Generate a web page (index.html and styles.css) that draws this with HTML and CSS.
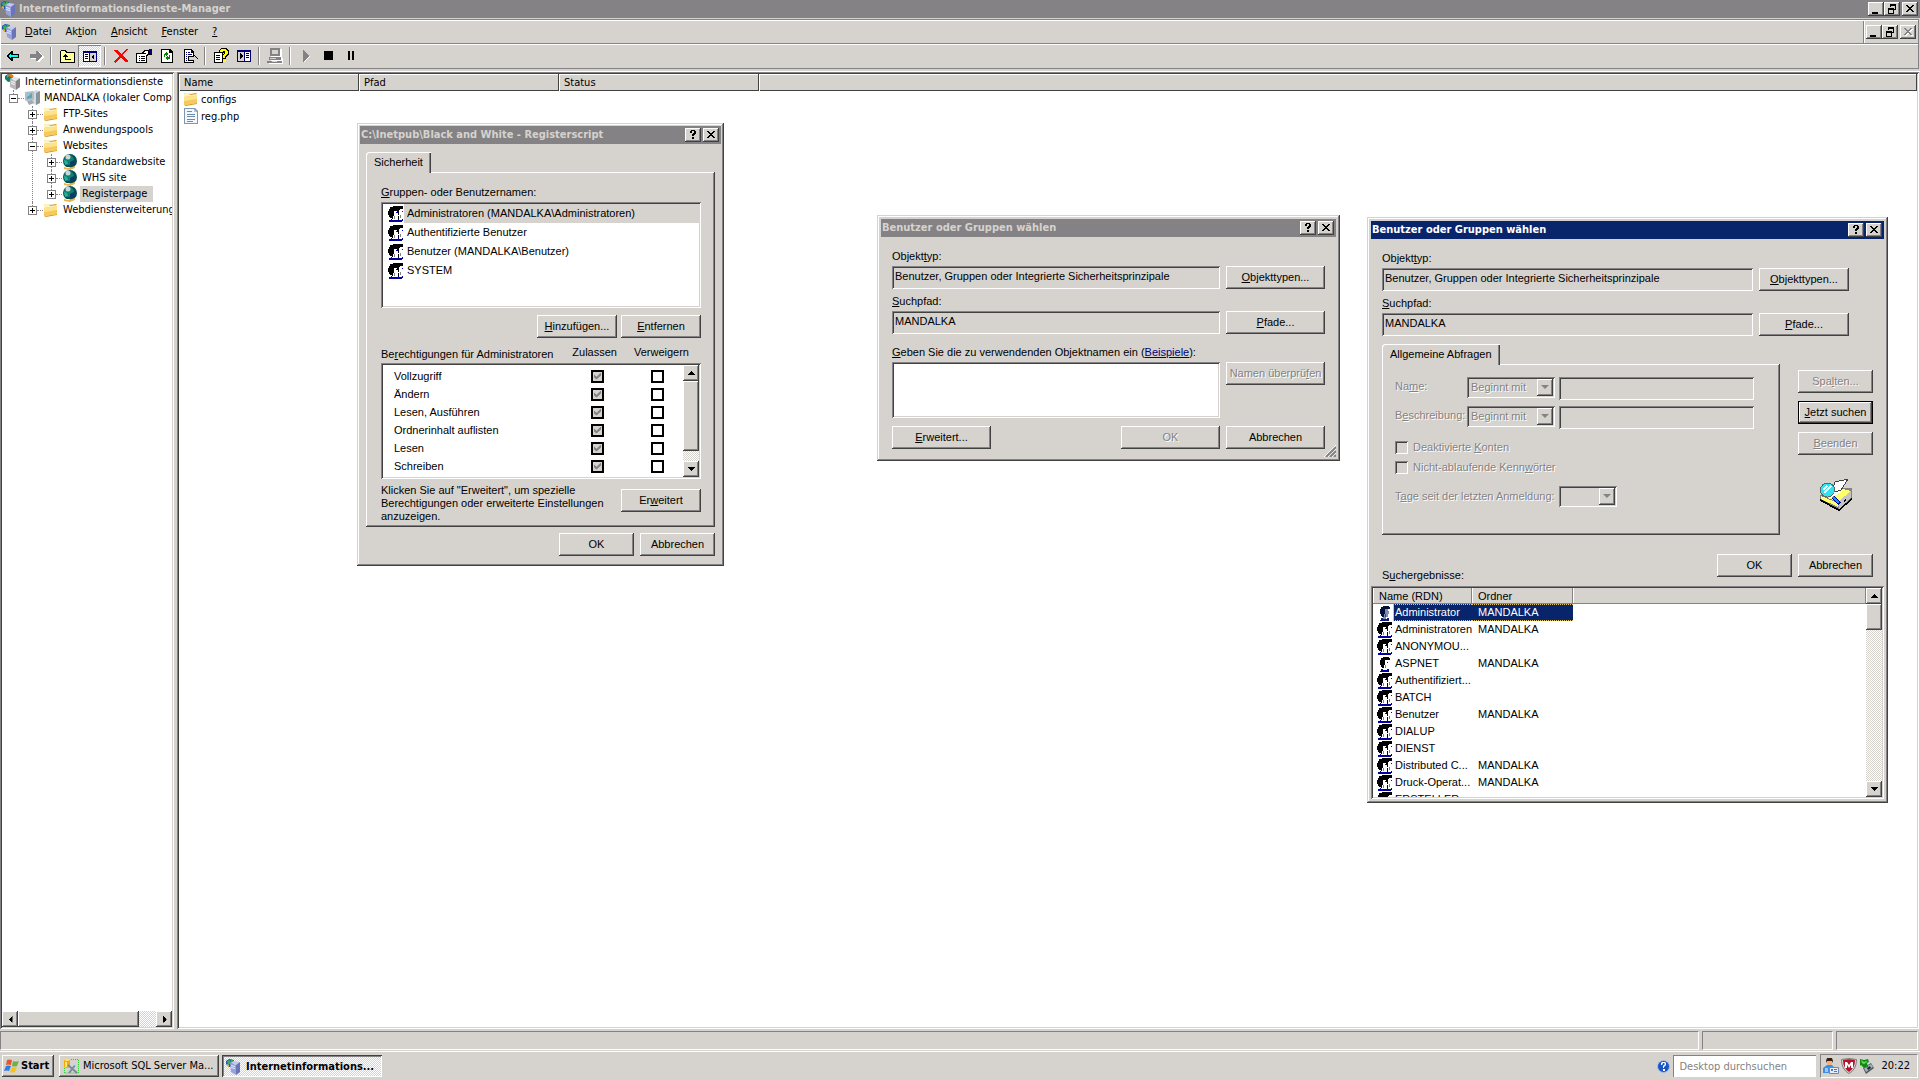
FILE: index.html
```html
<!DOCTYPE html>
<html lang="de">
<head>
    <meta charset="UTF-8">
    <meta name="viewport" content="width=device-width, initial-scale=1.0">
    <title>Internetinformationsdienste-Manager</title>
    <link rel="stylesheet" href="styles.css">
</head>
<body>
    <!-- Icon sprites -->
    <svg class="sprites" aria-hidden="true">
        <symbol id="server" viewBox="0 0 16 16">
            <path fill="#1c5ab5" d="M0 2l3-2 5 1v6L3 8 0 5z"/>
            <path fill="#3fae49" d="M1 2l3-1 1 3-3 2zM5 0l3 2-1 2-2-1z"/>
            <path fill="#f0b429" d="M1 5l2 1v2L1 7z"/>
            <path fill="#c3c8ee" d="M4 4l4-2 6 1-4 3z"/>
            <path fill="#9aa2dc" d="M4 4l6 2v10l-5-3z"/>
            <path fill="#6b74b8" d="M10 6l4-3v10l-4 3z"/>
            <path fill="#e9ebff" d="M5 6l4 1v1L5 7zM5 8l4 1v1L5 9z"/>
        </symbol>
        <symbol id="server-gray" viewBox="0 0 16 16">
            <path fill="#0f7d6c" d="M0 2l3-2 5 1v6L3 8 0 5z"/>
            <path fill="#e77817" d="M2 1l4-1 3 2-2 2-3-2-2 2z"/>
            <path fill="#e4e4e4" d="M5 5l4-2 6 1-4 3z"/>
            <path fill="#b9b9b9" d="M5 5l6 2v9l-6-3z"/>
            <path fill="#848284" d="M11 7l4-3v9l-4 3z"/>
            <path fill="#f7f7f7" d="M6 7l4 1v1L6 8zM6 9l4 1v1l-4-1z"/>
        </symbol>
        <symbol id="computer" viewBox="0 0 16 16">
            <path fill="#d4dade" d="M8 2l4-2 4 1v12l-4 2-4-2z"/>
            <path fill="#8a949b" d="M12 3l4-2v12l-4 2z"/>
            <path fill="#b3bcc2" d="M1 2l8-1 1 1v8l-8 1-1-1z"/>
            <path fill="#5fa3bd" d="M3 4l5-1v5L3 9z"/>
            <path fill="#8ecbe0" d="M3 4l5-1-5 4z"/>
            <path fill="#a2aab0" d="M3 11l5-1 2 3-5 2z"/>
        </symbol>
        <symbol id="folder" viewBox="0 0 16 16">
            <path fill="#d79a2b" d="M1 3l1-1h4l1 1 6-1 1 1v10l-11 2-2-1z"/>
            <path fill="#fdf3c0" d="M1 3l1-1h4l1 2 7-1v2L1 6z"/>
            <path fill="#ffe38b" d="M1 6l13-2v8L2 14l-1-1z"/>
            <path fill="#f6c95c" d="M1 10l13-2v4L2 14l-1-1z"/>
        </symbol>
        <symbol id="globe" viewBox="0 0 16 16">
            <circle cx="8" cy="7" r="7" fill="#06504f"/>
            <circle cx="7" cy="6" r="5" fill="#0d8078"/>
            <path fill="#0b3f62" d="M8 8l4-2 2 3-3 4-3-2z"/>
            <circle cx="6" cy="3" r="2.5" fill="#c8d6d4"/>
            <path fill="#2bb39a" d="M2 6l3 1 1 3-3 1z"/>
            <path fill="#e8b44f" d="M2 13l5 1 6-2v2l-5 2-6-1z"/>
            <path fill="#fff3c8" d="M3 13h4l2 1H5z"/>
        </symbol>
        <symbol id="file" viewBox="0 0 16 16">
            <path fill="#7d97b3" d="M1 0h11l3 3v13H1z"/>
            <path fill="#f3f6fa" d="M2 1h9v3h3v11H2z"/>
            <path fill="#b8c9dc" d="M11 1l3 3h-3z"/>
            <path fill="#6c8db0" d="M4 3h5v1H4zM4 6h8v1H4zM4 8h8v1H4zM4 11h8v1H4zM4 13h6v1H4z"/>
        </symbol>
        <symbol id="users" viewBox="0 0 16 16">
            <path fill="#000" d="M5 0h10v3h-2v1h-2v9H4v-1H2v-1H1V9H0V5h1V3h1V1h3z"/>
            <path fill="#00009c" d="M1 14h2v-1h3v1h4v-1h2v1h2v-1h1v2h-1v1H1z"/>
            <path fill="#fff" d="M6 5h3v2h1v2h1v1h-1v3H8v1H4v-1h1v-3h1zM12 3h3v2h1v4h-1v3h-1v2h-3v-3h1z"/>
            <path fill="#000" d="M5 6h1v3H5zM10 10h1v2h-1z"/>
            <path fill="#848284" d="M6 10h1v3H6zM12 9h1v3h-1z"/>
            <path fill="#00f" d="M8 6h1v1H8zM14 5h1v1h-1z"/>
        </symbol>
        <symbol id="user" viewBox="0 0 16 16">
            <path fill="#000" d="M6 1h6v1h1v2h-2v8H5v-1H4V9H3V4h1V2h2z"/>
            <path fill="#fff" d="M8 4h3v2h1v3h-1v3h-2v3H6v-3h1v-3h1z"/>
            <path fill="#00009c" d="M4 13h2v1h4v-1h2v3H3v-1h1z"/>
            <path fill="#00f" d="M10 6h1v1h-1z"/>
            <path fill="#848284" d="M8 9h1v3H8z"/>
        </symbol>
        <symbol id="user-sel" viewBox="0 0 16 16">
            <path fill="#04123a" d="M6 1h6v1h1v2h-2v8H5v-1H4V9H3V4h1V2h2z"/>
            <path fill="#7f8fb4" d="M8 4h3v2h1v3h-1v3h-2v3H6v-3h1v-3h1z"/>
            <path fill="#0a1f80" d="M4 13h2v1h4v-1h2v3H3v-1h1z"/>
            <path fill="#3b4c80" d="M8 9h1v3H8z"/>
        </symbol>
        <symbol id="minimize" viewBox="0 0 12 10"><path d="M2 8h6v2H2z"/></symbol>
        <symbol id="restore" viewBox="0 0 12 10"><path d="M4 0h6v6H8V5h1V2H5v1H4zM2 4h6v6H2zM3 6v3h4V6z" fill-rule="evenodd"/></symbol>
        <symbol id="close" viewBox="0 0 12 10"><path d="M2 1h2v1h1v1h2V2h1V1h2v1H9v1H8v1H7v1h1v1h1v1h1v1H8V7H7V6H5v1H4v1H2V7h1V6h1V5h1V4H4V3H3V2H2z"/></symbol>
        <symbol id="question" viewBox="0 0 12 10"><path d="M3 1h1V0h4v1h1v3H8v1H7v1H5V4h1V3h1V1H5v2H3zM5 7h2v2H5z"/></symbol>
        <symbol id="up" viewBox="0 0 7 4"><path d="M3 0h1v1h1v1h1v1h1v1H0V3h1V2h1V1h1z"/></symbol>
        <symbol id="down" viewBox="0 0 7 4"><path d="M0 0h7v1H6v1H5v1H4v1H3V3H2V2H1V1H0z"/></symbol>
    </svg>

    <header class="titlebar app-title">
        <svg class="icon"><use href="#server"/></svg>
        <h1>Internetinformationsdienste-Manager</h1>
        <div class="caption-buttons">
            <button type="button" aria-label="Minimieren"><svg><use href="#minimize"/></svg></button>
            <button type="button" aria-label="Wiederherstellen"><svg><use href="#restore"/></svg></button>
            <button type="button" class="close" aria-label="Schließen"><svg><use href="#close"/></svg></button>
        </div>
    </header>

    <div class="rebar">
        <nav class="menubar">
            <svg class="icon"><use href="#server"/></svg>
            <button type="button"><u>D</u>atei</button>
            <button type="button">Ak<u>t</u>ion</button>
            <button type="button"><u>A</u>nsicht</button>
            <button type="button"><u>F</u>enster</button>
            <button type="button"><u>?</u></button>
            <div class="caption-buttons mdi">
                <button type="button" aria-label="Minimieren"><svg><use href="#minimize"/></svg></button>
                <button type="button" aria-label="Wiederherstellen"><svg><use href="#restore"/></svg></button>
                <button type="button" class="close" aria-label="Schließen" disabled><svg><use href="#close"/></svg></button>
            </div>
        </nav>
        <div class="toolbar">
            <button type="button" aria-label="Zurück"><svg viewBox="0 0 16 16"><path d="M8 3v3h6v4H8v3H6L1 8l5-5z"/><path fill="#0ff" d="M6 5v2h7v2H6v2L3 8z"/></svg></button>
            <button type="button" aria-label="Vorwärts"><svg viewBox="0 0 16 16"><path fill="#fff" d="M9 4v3H3v4h6v3h2l5-5-5-5z"/><path fill="#848284" d="M8 3v3H2v4h6v3h1l5-5-5-5z"/></svg></button>
            <span class="sep"></span>
            <button type="button" aria-label="Nach oben"><svg viewBox="0 0 16 16"><path d="M2 2h5l1 2h7l1 1v10H1V3z"/><path fill="#ffff9c" d="M2 3h4l1 2h8v9H2z"/><path d="M6 6h1v1h1v1h1v1H7v2h5v1H6V9H4V8h1V7h1z"/></svg></button>
            <button type="button" class="pressed" aria-label="Konsolenstruktur"><svg viewBox="0 0 16 16"><path fill="#00007b" d="M1 3h14v11H1z"/><path fill="#fff" d="M2 5h5v8H2z"/><path fill="#d6d3ce" d="M8 5h6v8H8z"/><path d="M3 6h3v1H3zM3 8h3v1H3zM3 10h3v1H3zM12 6v6L9 9z"/></svg></button>
            <span class="sep"></span>
            <button type="button" aria-label="Löschen"><svg viewBox="0 0 16 16"><path fill="#f00" d="M1 2h3l4 4 5-5h2l-5 6 5 6v1h-3L8 9l-4 5-2 1-1-1 5-6z"/></svg></button>
            <button type="button" aria-label="Eigenschaften"><svg viewBox="0 0 16 16"><path d="M0 5h5l4-3h4V1h3v6h-3l-2 1v7H0z"/><path fill="#fff" d="M1 6h5l3-3h3v3l-2 1v7H1z"/><path fill="#00007b" d="M13 1h3v5h-3z"/><path d="M3 8h1v1H3zM5 8h4v1H5zM3 10h1v1H3zM5 10h4v1H5zM3 12h1v1H3zM5 12h4v1H5zM6 5h4v1H6z"/></svg></button>
            <button type="button" aria-label="Aktualisieren"><svg viewBox="0 0 16 16"><path d="M2 1h9l3 3v11H2z"/><path fill="#fff" d="M3 2h7v3h3v9H3z"/><path fill="#008200" d="M7 4l3 2-3 2V7H6v2H5V6l1-1h1zM9 8l-3 2 3 2v-1h1l1-1V7h-1v2H9z"/></svg></button>
            <button type="button" aria-label="Liste exportieren"><svg viewBox="0 0 16 16"><path d="M2 1h8l2 3v3l3 3-3 4v1H2z"/><path fill="#fff" d="M3 2h6v3h2v9H3z"/><path fill="#00007b" d="M4 4h1v1H4zM6 4h2v1H6zM4 6h1v1H4zM6 6h4v1H6zM4 8h1v1H4zM4 10h1v1H4zM4 12h1v1H4z"/><path d="M6 8h5V6l5 5-5 4v-2H6z"/><path fill="#d6d3ce" d="M7 9h5V8l3 3-3 3v-2H7z"/></svg></button>
            <span class="sep"></span>
            <button type="button" aria-label="Hilfe"><svg viewBox="0 0 16 16"><path d="M1 4h9v11H1z"/><path fill="#fff" d="M2 5h7v9H2z"/><path d="M3 7h4v1H3zM3 9h4v1H3zM3 11h4v1H3zM6 2l2-2h5l3 2v4l-3 3v2H9V8l2-3H6z"/><path fill="#ff0" d="M7 2l1-1h4l3 2v2l-3 3v2h-2V8l2-3V3h-2v1H7zM10 12h3v2h-3z"/></svg></button>
            <button type="button" aria-label="Aktionsbereich"><svg viewBox="0 0 16 16"><path fill="#00007b" d="M1 2h14v12H1z"/><path fill="#fff" d="M9 4h5v9H9z"/><path fill="#d6d3ce" d="M2 4h6v9H2z"/><path d="M10 5h3v1h-3zM10 7h3v1h-3zM10 9h3v1h-3zM4 5v6l3-3z"/></svg></button>
            <span class="sep"></span>
            <button type="button" aria-label="Verbinden" disabled><svg viewBox="0 0 16 16"><path fill="#fff" d="M4 1h11v9h1v6H2v-3h2z"/><path fill="#848284" d="M3 0h10v8H3zM2 9h12v3H2zM0 13h15v2H0z"/><path fill="#d6d3ce" d="M5 2h6v4H5zM3 10h6v1H3zM5 13h5v1H5z"/></svg></button>
            <span class="sep"></span>
            <button type="button" aria-label="Starten" disabled><svg viewBox="0 0 16 16"><path fill="#fff" d="M6 3l6 6-6 5z"/><path fill="#848284" d="M5 2l6 6-6 6z"/></svg></button>
            <button type="button" aria-label="Beenden"><svg viewBox="0 0 16 16"><path d="M3 3h9v9H3z"/></svg></button>
            <button type="button" aria-label="Anhalten"><svg viewBox="0 0 16 16"><path d="M4 3h2v9H4zM8 3h2v9H8z"/></svg></button>
        </div>
    </div>

    <main class="workspace">
        <aside class="tree-pane sunken">
            <div class="tree">
                <div class="node root"><svg class="icon"><use href="#server-gray"/></svg><span>Internetinformationsdienste</span></div>
                <ul>
                    <li>
                        <div class="node"><i class="box minus"></i><svg class="icon"><use href="#computer"/></svg><span>MANDALKA (lokaler Computer)</span></div>
                        <ul>
                            <li><div class="node"><i class="box plus"></i><svg class="icon"><use href="#folder"/></svg><span>FTP-Sites</span></div></li>
                            <li><div class="node"><i class="box plus"></i><svg class="icon"><use href="#folder"/></svg><span>Anwendungspools</span></div></li>
                            <li>
                                <div class="node"><i class="box minus"></i><svg class="icon"><use href="#folder"/></svg><span>Websites</span></div>
                                <ul>
                                    <li><div class="node"><i class="box plus"></i><svg class="icon"><use href="#globe"/></svg><span>Standardwebsite</span></div></li>
                                    <li><div class="node"><i class="box plus"></i><svg class="icon"><use href="#globe"/></svg><span>WHS site</span></div></li>
                                    <li><div class="node selected"><i class="box plus"></i><svg class="icon"><use href="#globe"/></svg><span>Registerpage</span></div></li>
                                </ul>
                            </li>
                            <li><div class="node"><i class="box plus"></i><svg class="icon"><use href="#folder"/></svg><span>Webdiensterweiterungen</span></div></li>
                        </ul>
                    </li>
                </ul>
            </div>
            <div class="scrollbar horizontal">
                <button type="button" aria-label="Nach links"><svg class="turn-left"><use href="#up"/></svg></button>
                <span class="thumb"></span>
                <span class="track"></span>
                <button type="button" aria-label="Nach rechts"><svg class="turn-right"><use href="#up"/></svg></button>
            </div>
        </aside>

        <section class="list-pane sunken">
            <table class="files">
                <colgroup><col class="c-name"><col class="c-path"><col class="c-status"><col></colgroup>
                <thead>
                    <tr><th>Name</th><th>Pfad</th><th>Status</th><td></td></tr>
                </thead>
                <tbody>
                    <tr><td><svg class="icon"><use href="#folder"/></svg>configs</td><td></td><td></td><td></td></tr>
                    <tr><td><svg class="icon"><use href="#file"/></svg>reg.php</td><td></td><td></td><td></td></tr>
                </tbody>
            </table>
        </section>
    </main>

    <div class="statusbar"><span></span><span class="mid"></span><span class="end"></span></div>

    <footer class="taskbar">
        <button type="button" class="start">
            <svg class="icon" viewBox="0 0 16 16"><path fill="#e4572e" d="M3 2q2-1 5 0L7 7Q4 6 2 7z"/><path fill="#6cb33f" d="M9 3q3 1 6 0l-2 5q-2 1-5 0z"/><path fill="#2f7de1" d="M2 8q2-1 5 0l-2 5q-2-1-5 0z"/><path fill="#f6c419" d="M8 9q3 1 5 0l-2 5q-2 1-5 0z"/></svg>
            Start
        </button>
        <button type="button" class="task">
            <svg class="icon" viewBox="0 0 16 16"><path fill="#f5a800" d="M1 2q3-3 6 0v7q-3 2-6 0z"/><path fill="#ffe27a" d="M1 2q3-3 6 0-3 2-6 0zM2 4h2v5H2z"/><path fill="none" stroke="#35c635" stroke-dasharray="1 1" d="M8 1.500h7.500V15M1.500 10v5H15"/><path fill="none" stroke="#7a8aa0" stroke-width="2" d="M5 7l9 8M13 6l-7 9"/><path fill="#c9d4e4" d="M10 5h5v2l-2 1-3-1z"/></svg>
            Microsoft SQL Server Ma...
        </button>
        <button type="button" class="task active">
            <svg class="icon"><use href="#server"/></svg>
            Internetinformations...
        </button>
        <div class="search">
            <svg class="help" viewBox="0 0 13 13"><circle cx="6.500" cy="6.500" r="6" fill="#1d56c4" stroke="#a9c1ec"/><path fill="#fff" d="M4 5V3l1-1h3l1 1v2L7 7v1H6V6l2-2-1-1H6L5 5zM6 9h2v2H6z"/></svg>
            <input type="text" aria-label="Desktop durchsuchen" placeholder="Desktop durchsuchen">
        </div>
        <div class="tray">
            <svg class="icon" viewBox="0 0 16 16"><path fill="#3a1d0c" d="M4 0h5l1 3-1 2H4L3 3z"/><path fill="#f0b080" d="M4 3h5v3L7 8H6L4 6z"/><path fill="#3f8de0" d="M0 10l4-3h5l3 3v5H0z"/><path fill="#9cc6f4" d="M2 10h3v4H2z"/><path fill="#e7edf7" stroke="#6f87ad" d="M6.500 9.500h9v6h-9z"/><path fill="#4b78c2" d="M8 11h2v2H8zM11 11h3v1h-3zM11 13h3v1h-3z"/></svg>
            <svg class="icon" viewBox="0 0 16 16"><path fill="#d9d9d9" stroke="#7c7c7c" d="M.5 1.500Q8-.5 15.500 1.500q0 10-7.500 14-7.500-4-7.500-14z"/><path fill="#b5122a" d="M2 2q6-1.500 12 0 0 8-6 12Q2 10 2 2z"/><path fill="#fff" d="M4 10V4h2l2 3 2-3h2v6h-2V7L8 10 6 7v3z"/></svg>
            <svg class="icon" viewBox="0 0 16 16"><path fill="#4d5660" d="M4 10l8-5 3 5-8 6z"/><path fill="#a9b2ba" d="M5 10l7-4 2 3-7 5z"/><path fill="#1c2a36" d="M8 10l3-2 1 2-3 2z"/><path fill="#148a14" d="M1 1l4 1 4-1 1 3-2 1 1 4-4 1-3-3-1 1z"/><path fill="#5fe05f" d="M2 2l3 2 3-1v1L5 6 3 5z"/></svg>
            <time>20:22</time>
        </div>
    </footer>

    <!-- Security properties -->
    <section class="window dialog-security" aria-labelledby="t-security">
        <div class="titlebar">
            <h2 id="t-security">C:\Inetpub\Black and White - Registerscript</h2>
            <div class="caption-buttons">
                <button type="button" aria-label="Hilfe"><svg><use href="#question"/></svg></button>
                <button type="button" class="close" aria-label="Schließen"><svg><use href="#close"/></svg></button>
            </div>
        </div>
        <div class="window-body">
            <button type="button" class="tab">Sicherheit</button>
            <div class="panel">
                <div class="label"><u>G</u>ruppen- oder Benutzernamen:</div>
                <ul class="groups sunken">
                    <li class="selected"><svg class="icon"><use href="#users"/></svg><span>Administratoren (MANDALKA\Administratoren)</span></li>
                    <li><svg class="icon"><use href="#users"/></svg><span>Authentifizierte Benutzer</span></li>
                    <li><svg class="icon"><use href="#users"/></svg><span>Benutzer (MANDALKA\Benutzer)</span></li>
                    <li><svg class="icon"><use href="#users"/></svg><span>SYSTEM</span></li>
                </ul>
                <div class="group-buttons">
                    <button type="button" class="btn"><u>H</u>inzufügen...</button>
                    <button type="button" class="btn"><u>E</u>ntfernen</button>
                </div>
                <div class="perm-head">
                    <span class="who">Be<u>r</u>echtigungen für Administratoren</span>
                    <span>Zulassen</span>
                    <span>Verweigern</span>
                </div>
                <div class="perms sunken">
                    <table>
                        <tr><th scope="row">Vollzugriff</th><td><input type="checkbox" aria-label="Vollzugriff zulassen" checked disabled></td><td><input type="checkbox" aria-label="Vollzugriff verweigern"></td></tr>
                        <tr><th scope="row">Ändern</th><td><input type="checkbox" aria-label="Ändern zulassen" checked disabled></td><td><input type="checkbox" aria-label="Ändern verweigern"></td></tr>
                        <tr><th scope="row">Lesen, Ausführen</th><td><input type="checkbox" aria-label="Ausführen zulassen" checked disabled></td><td><input type="checkbox" aria-label="Ausführen verweigern"></td></tr>
                        <tr><th scope="row">Ordnerinhalt auflisten</th><td><input type="checkbox" aria-label="Auflisten zulassen" checked disabled></td><td><input type="checkbox" aria-label="Auflisten verweigern"></td></tr>
                        <tr><th scope="row">Lesen</th><td><input type="checkbox" aria-label="Lesen zulassen" checked disabled></td><td><input type="checkbox" aria-label="Lesen verweigern"></td></tr>
                        <tr><th scope="row">Schreiben</th><td><input type="checkbox" aria-label="Schreiben zulassen" checked disabled></td><td><input type="checkbox" aria-label="Schreiben verweigern"></td></tr>
                    </table>
                    <div class="scrollbar">
                        <button type="button" aria-label="Nach oben"><svg><use href="#up"/></svg></button>
                        <span class="thumb"></span>
                        <span class="track"></span>
                        <button type="button" aria-label="Nach unten"><svg><use href="#down"/></svg></button>
                    </div>
                </div>
                <div class="note">
                    <p>Klicken Sie auf "Erweitert", um spezielle<br>Berechtigungen oder erweiterte Einstellungen<br>anzuzeigen.</p>
                    <button type="button" class="btn">Er<u>w</u>eitert</button>
                </div>
            </div>
            <div class="actions">
                <button type="button" class="btn">OK</button>
                <button type="button" class="btn">Abbrechen</button>
            </div>
        </div>
    </section>

    <!-- Object picker, simple -->
    <section class="window sizable dialog-pick" aria-labelledby="t-pick">
        <div class="titlebar">
            <h2 id="t-pick">Benutzer oder Gruppen wählen</h2>
            <div class="caption-buttons">
                <button type="button" aria-label="Hilfe"><svg><use href="#question"/></svg></button>
                <button type="button" class="close" aria-label="Schließen"><svg><use href="#close"/></svg></button>
            </div>
        </div>
        <form class="window-body">
            <label for="pick-type">Objekt<u>t</u>yp:</label>
            <div class="row">
                <input class="field" id="pick-type" type="text" readonly value="Benutzer, Gruppen oder Integrierte Sicherheitsprinzipale">
                <button type="button" class="btn"><u>O</u>bjekttypen...</button>
            </div>
            <label for="pick-path"><u>S</u>uchpfad:</label>
            <div class="row">
                <input class="field" id="pick-path" type="text" readonly value="MANDALKA">
                <button type="button" class="btn"><u>P</u>fade...</button>
            </div>
            <label for="pick-names" class="names"><u>G</u>eben Sie die zu verwendenden Objektnamen ein (<a href="#">Beispiele</a>):</label>
            <div class="row">
                <textarea class="field" id="pick-names"></textarea>
                <button type="button" class="btn" disabled>Namen überprü<u>f</u>en</button>
            </div>
            <div class="row bottom">
                <button type="button" class="btn first"><u>E</u>rweitert...</button>
                <button type="button" class="btn" disabled>OK</button>
                <button type="button" class="btn">Abbrechen</button>
            </div>
        </form>
        <svg class="grip" viewBox="0 0 12 12"><path stroke="#fff" d="M0 12L12 0M4 12l8-8M8 12l4-4"/><path stroke="#848284" stroke-width="2" d="M2 12L12 2M6 12l6-6M10 12l2-2"/></svg>
    </section>

    <!-- Object picker, advanced -->
    <section class="window sizable dialog-search" aria-labelledby="t-search">
        <div class="titlebar active">
            <h2 id="t-search">Benutzer oder Gruppen wählen</h2>
            <div class="caption-buttons">
                <button type="button" aria-label="Hilfe"><svg><use href="#question"/></svg></button>
                <button type="button" class="close" aria-label="Schließen"><svg><use href="#close"/></svg></button>
            </div>
        </div>
        <form class="window-body">
            <label for="s-type">Objekt<u>t</u>yp:</label>
            <div class="row">
                <input class="field" id="s-type" type="text" readonly value="Benutzer, Gruppen oder Integrierte Sicherheitsprinzipale">
                <button type="button" class="btn"><u>O</u>bjekttypen...</button>
            </div>
            <label for="s-path"><u>S</u>uchpfad:</label>
            <div class="row">
                <input class="field" id="s-path" type="text" readonly value="MANDALKA">
                <button type="button" class="btn"><u>P</u>fade...</button>
            </div>
            <div class="query">
                <div class="query-main">
                    <button type="button" class="tab">Allgemeine Abfragen</button>
                    <div class="panel disabled">
                        <div class="criteria">
                            <label for="q-name">Na<u>m</u>e:</label>
                            <span class="combo"><select id="q-name" disabled><option>Beginnt mit</option></select></span>
                            <input class="field" type="text" aria-label="Name" disabled>
                            <label for="q-desc">B<u>e</u>schreibung:</label>
                            <span class="combo"><select id="q-desc" disabled><option>Beginnt mit</option></select></span>
                            <input class="field" type="text" aria-label="Beschreibung" disabled>
                        </div>
                        <div class="check"><input type="checkbox" id="q-off" disabled><label for="q-off">Deaktivierte <u>K</u>onten</label></div>
                        <div class="check"><input type="checkbox" id="q-pw" disabled><label for="q-pw">Nicht-ablaufende Kenn<u>w</u>örter</label></div>
                        <div class="days">
                            <label for="q-days">T<u>a</u>ge seit der letzten Anmeldung:</label>
                            <span class="combo"><select id="q-days" disabled><option></option></select></span>
                        </div>
                    </div>
                </div>
                <div class="query-side">
                    <button type="button" class="btn" disabled>Spa<u>l</u>ten...</button>
                    <button type="button" class="btn default"><u>J</u>etzt suchen</button>
                    <button type="button" class="btn" disabled><u>B</u>eenden</button>
                    <svg class="find" viewBox="0 0 32 32">
                        <path fill="#848284" d="M0 16l13-6 19-1v10L19 31 0 21z"/>
                        <path fill="#ffff6b" d="M1 16l14-8 16 4-13 11z"/>
                        <path fill="#fff" d="M4 16l12-5 5 2-10 6z"/>
                        <path fill="#c3c3c3" d="M18 23l13-11v7L19 30z"/>
                        <path fill="#ffff6b" d="M1 17l17 7v4L1 20z"/>
                        <path d="M0 20l19 10 13-11v2L19 32 0 22zM24 21l2-2v2l-2 2z"/>
                        <path fill="#fff" stroke="#424142" d="M15 3l13-3-7 11-10 3z"/>
                        <circle cx="7.500" cy="11" r="7" fill="#31e3ef" stroke="#5a6668"/>
                        <path stroke="#fff" stroke-width="2" d="M4 14l7-7M3 11l4-4"/>
                        <path stroke="#00007b" stroke-width="4" d="M13 18l7 7"/>
                        <path stroke="#09f" stroke-width="2" d="M13 18l6 6"/>
                    </svg>
                </div>
            </div>
            <div class="row results-bar">
                <span class="results-label">S<u>u</u>chergebnisse:</span>
                <button type="button" class="btn">OK</button>
                <button type="button" class="btn">Abbrechen</button>
            </div>
        </form>
        <div class="results sunken">
            <div class="results-view">
                <table>
                    <colgroup><col class="c-rdn"><col class="c-folder"><col></colgroup>
                    <thead><tr><th>Name (RDN)</th><th>Ordner</th><td></td></tr></thead>
                    <tbody>
                        <tr class="selected"><td><svg class="icon"><use href="#user-sel"/></svg><span>Administrator</span></td><td>MANDALKA</td><td></td></tr>
                        <tr><td><svg class="icon"><use href="#users"/></svg><span>Administratoren</span></td><td>MANDALKA</td><td></td></tr>
                        <tr><td><svg class="icon"><use href="#users"/></svg><span>ANONYMOU...</span></td><td></td><td></td></tr>
                        <tr><td><svg class="icon"><use href="#user"/></svg><span>ASPNET</span></td><td>MANDALKA</td><td></td></tr>
                        <tr><td><svg class="icon"><use href="#users"/></svg><span>Authentifiziert...</span></td><td></td><td></td></tr>
                        <tr><td><svg class="icon"><use href="#users"/></svg><span>BATCH</span></td><td></td><td></td></tr>
                        <tr><td><svg class="icon"><use href="#users"/></svg><span>Benutzer</span></td><td>MANDALKA</td><td></td></tr>
                        <tr><td><svg class="icon"><use href="#users"/></svg><span>DIALUP</span></td><td></td><td></td></tr>
                        <tr><td><svg class="icon"><use href="#users"/></svg><span>DIENST</span></td><td></td><td></td></tr>
                        <tr><td><svg class="icon"><use href="#users"/></svg><span>Distributed C...</span></td><td>MANDALKA</td><td></td></tr>
                        <tr><td><svg class="icon"><use href="#users"/></svg><span>Druck-Operat...</span></td><td>MANDALKA</td><td></td></tr>
                        <tr><td><svg class="icon"><use href="#users"/></svg><span>ERSTELLER</span></td><td></td><td></td></tr>
                    </tbody>
                </table>
            </div>
            <div class="scrollbar">
                <button type="button" aria-label="Nach oben"><svg><use href="#up"/></svg></button>
                <span class="thumb"></span>
                <span class="track"></span>
                <button type="button" aria-label="Nach unten"><svg><use href="#down"/></svg></button>
            </div>
        </div>
    </section>
</body>
</html>
```
FILE: styles.css
```css
:root {
    --face: #d6d3ce;
    --shadow: #848284;
    --dark: #424142;
    --navy: #08246b;
    --raised: inset -1px -1px var(--dark), inset 1px 1px #fff, inset -2px -2px var(--shadow);
    --sunken: inset 1px 1px var(--shadow), inset -1px -1px #fff, inset 2px 2px var(--dark), inset -2px -2px var(--face);
    --checker: repeating-conic-gradient(#fff 0 25%, var(--face) 0 50%) 0 0 / 2px 2px;
    --ui-font: "DejaVu Sans Condensed", "DejaVu Sans", sans-serif;
    --dialog-font: "Liberation Sans", Arial, sans-serif;
}

* {
    margin: 0;
    padding: 0;
    box-sizing: border-box;
}

body {
    display: flex;
    flex-direction: column;
    height: 100vh;
    overflow: hidden;
    position: relative;
    background: var(--face);
    color: #000;
    font: 11px/16px var(--ui-font);
}

button, input, select, textarea {
    font: inherit;
    color: inherit;
    border: 0;
    border-radius: 0;
    background: none;
    outline: none;
}

ul {
    list-style: none;
}

table {
    border-collapse: collapse;
    table-layout: fixed;
    width: 100%;
}

th {
    font-weight: normal;
    text-align: left;
}

svg {
    display: block;
    flex: none;
}

.sprites {
    position: absolute;
    width: 0;
    height: 0;
}

.icon {
    width: 16px;
    height: 16px;
}

.sunken {
    background: #fff;
    box-shadow: var(--sunken);
    padding: 2px;
}

/* Title bars */
.titlebar {
    display: flex;
    align-items: center;
    height: 18px;
    padding: 0 2px 0 1px;
    background: var(--shadow);
    color: var(--face);
}

.titlebar.active {
    background: var(--navy);
    color: #fff;
}

.titlebar h1, .titlebar h2 {
    flex: 1;
    font: bold 11px/18px var(--ui-font);
    white-space: nowrap;
}

.app-title {
    flex: none;
    gap: 2px;
}

.caption-buttons {
    display: flex;
}

.caption-buttons button {
    width: 16px;
    height: 14px;
    padding: 2px;
    background: var(--face);
    box-shadow: var(--raised);
}

.caption-buttons .close {
    margin-left: 2px;
}

.caption-buttons svg {
    width: 12px;
    height: 10px;
    fill: #000;
    shape-rendering: crispEdges;
}

.caption-buttons :disabled svg {
    fill: var(--shadow);
    filter: drop-shadow(1px 1px 0 #fff);
}

/* Menu and toolbar */
.rebar {
    margin: 1px 1px 2px 0;
    border: 1px solid var(--shadow);
    border-left-color: #fff;
}

.menubar {
    display: flex;
    align-items: center;
    height: 24px;
    padding-left: 1px;
    border-top: 1px solid #fff;
    border-bottom: 1px solid var(--shadow);
}

.menubar > button {
    padding: 0 7px;
    line-height: 20px;
}

.mdi {
    align-items: center;
    align-self: stretch;
    margin-left: auto;
    padding: 0 2px;
    border-left: 1px solid var(--shadow);
    box-shadow: inset 1px 0 #fff;
}

.toolbar {
    display: flex;
    align-items: center;
    height: 24px;
    border-top: 1px solid #fff;
    border-bottom: 1px solid var(--face);
}

.toolbar button {
    display: flex;
    align-items: center;
    justify-content: center;
    width: 23px;
    height: 22px;
}

.toolbar svg {
    width: 16px;
    height: 16px;
    shape-rendering: crispEdges;
}

.toolbar .pressed {
    background: var(--checker);
    box-shadow: inset 1px 1px var(--shadow), inset -1px -1px #fff;
}

.sep {
    width: 2px;
    height: 18px;
    margin: 0 3px;
    border-left: 1px solid var(--shadow);
    border-right: 1px solid #fff;
}

/* Panes */
.workspace {
    display: flex;
    gap: 3px;
    flex: 1;
    min-height: 0;
    padding-right: 1px;
    border-top: 1px solid #fff;
}

.tree-pane {
    display: flex;
    flex-direction: column;
    width: 174px;
}

.tree {
    flex: 1;
    overflow: hidden;
    white-space: nowrap;
}

.tree > ul {
    margin-left: 7px;
}

.tree ul ul {
    margin-left: 19px;
}

.tree li {
    position: relative;
}

.tree li::before {
    content: "";
    position: absolute;
    left: 4px;
    top: 0;
    height: 100%;
    border-left: 1px dotted var(--shadow);
}

.tree li:last-child::before {
    height: 8px;
}

.node {
    display: flex;
    align-items: center;
    gap: 2px;
    height: 16px;
}

.node.root {
    padding-left: 3px;
}

.node span {
    padding: 0 2px;
}

.node.selected span {
    padding-right: 6px;
    background: var(--face);
}

.box {
    position: relative;
    flex: none;
    width: 9px;
    height: 9px;
    margin-right: 4px;
    border: 1px solid var(--shadow);
    background: linear-gradient(#000, #000) 1px 3px / 5px 1px no-repeat #fff;
}

.box.plus {
    background: linear-gradient(#000, #000) 1px 3px / 5px 1px no-repeat, linear-gradient(#000, #000) 3px 1px / 1px 5px no-repeat #fff;
}

.box::after {
    content: "";
    position: absolute;
    left: 8px;
    top: 3px;
    width: 6px;
    border-top: 1px dotted var(--shadow);
}

.list-pane {
    flex: 1;
    min-width: 0;
}

.files td {
    height: 17px;
    line-height: 17px;
}

.files th, .files thead td {
    height: 17px;
    padding-left: 5px;
    line-height: 15px;
    background: var(--face);
    box-shadow: inset -1px 0 var(--dark), inset 1px 1px #fff, inset 0 -1px var(--dark);
}

.files .icon {
    display: inline-block;
    margin: 0 2px 0 4px;
    vertical-align: top;
}

.c-name {
    width: 180px;
}

.c-path, .c-status {
    width: 200px;
}

/* Scroll bars */
.scrollbar {
    display: flex;
    flex: none;
    flex-direction: column;
    width: 16px;
    background: var(--checker);
}

.scrollbar.horizontal {
    flex-direction: row;
    width: auto;
    height: 16px;
}

.scrollbar button {
    display: flex;
    align-items: center;
    justify-content: center;
    width: 16px;
    height: 16px;
    background: var(--face);
    box-shadow: var(--raised);
}

.scrollbar svg {
    width: 7px;
    height: 4px;
    shape-rendering: crispEdges;
}

.turn-left {
    transform: rotate(-90deg);
}

.turn-right {
    transform: rotate(90deg);
}

.thumb {
    background: var(--face);
    box-shadow: var(--raised);
}

.track {
    flex: 1;
}

.horizontal .thumb {
    width: 121px;
}

/* Status bar and task bar */
.statusbar {
    display: flex;
    gap: 3px;
    height: 19px;
    margin-top: 2px;
    padding-right: 2px;
}

.statusbar span {
    flex: 1;
    border: 1px solid;
    border-color: var(--shadow) #fff #fff var(--shadow);
}

.statusbar .mid {
    flex: 0 0 131px;
}

.statusbar .end {
    flex: 0 0 82px;
}

.taskbar {
    display: flex;
    align-items: center;
    height: 29px;
    margin-top: 1px;
    padding: 0 2px;
    border-top: 1px solid #fff;
}

.taskbar button {
    display: flex;
    align-items: center;
    gap: 4px;
    height: 22px;
    padding: 0 4px;
    background: var(--face);
    box-shadow: var(--raised);
    white-space: nowrap;
}

.taskbar .start {
    width: 52px;
    padding: 0 2px;
    gap: 1px;
    margin-right: 5px;
    font-weight: bold;
}

.taskbar .task {
    width: 160px;
    margin-right: 3px;
}

.taskbar .active {
    padding-top: 2px;
    background: var(--checker);
    box-shadow: inset 1px 1px var(--dark), inset -1px -1px #fff, inset 2px 2px var(--shadow);
    font-weight: bold;
}

.search {
    display: flex;
    align-items: center;
    gap: 3px;
    margin-left: auto;
}

.help {
    width: 13px;
    height: 13px;
}

.search input {
    width: 143px;
    height: 22px;
    padding: 0 6px;
    background: #fff;
    box-shadow: inset 1px 1px var(--shadow);
}

.search input::placeholder {
    color: var(--shadow);
}

.tray {
    display: flex;
    align-items: center;
    gap: 2px;
    height: 24px;
    margin-left: 4px;
    padding: 0 7px 0 2px;
    border: 1px solid;
    border-color: var(--shadow) #fff #fff var(--shadow);
}

.tray time {
    margin-left: 4px;
}

/* Dialog windows */
.window {
    position: absolute;
    padding: 3px;
    background: var(--face);
    box-shadow: inset -1px -1px var(--dark), inset 1px 1px var(--face), inset -2px -2px var(--shadow), inset 2px 2px #fff;
    font: 11px/13px var(--dialog-font);
}

.window.sizable {
    padding: 4px;
}

.dialog-security {
    left: 357px;
    top: 123px;
    width: 367px;
}

.dialog-pick {
    left: 877px;
    top: 215px;
    width: 463px;
}

.dialog-search {
    left: 1367px;
    top: 217px;
    width: 521px;
}

.window-body {
    padding: 13px 11px 8px;
}

.window-body label {
    display: block;
    margin-bottom: 3px;
    white-space: nowrap;
}

.btn {
    height: 23px;
    background: var(--face);
    box-shadow: var(--raised);
    text-align: center;
    white-space: nowrap;
}

.btn.default {
    border: 1px solid #000;
}

.btn:disabled, .panel.disabled label, .combo select {
    color: var(--shadow);
    text-shadow: 1px 1px #fff;
    opacity: 1;
}

.field {
    min-width: 0;
    height: 23px;
    padding: 0 3px 4px;
    background: var(--face);
    box-shadow: var(--sunken);
}

.row {
    display: flex;
    align-items: flex-start;
    gap: 6px;
    margin-bottom: 6px;
}

.row .field {
    flex: 1;
}

.tab {
    display: block;
    position: relative;
    height: 21px;
    margin-bottom: -1px;
    padding: 0 8px;
    border-radius: 3px 0 0 0;
    background: var(--face);
    box-shadow: inset 1px 1px #fff, inset -1px 0 var(--dark), inset -2px 0 var(--shadow);
}

.panel {
    box-shadow: var(--raised);
}

/* Security dialog */
.dialog-security .window-body {
    padding: 8px 6px 7px;
}

.dialog-security .panel {
    padding: 14px 14px 4px 15px;
}

.label {
    margin-bottom: 3px;
}

.groups {
    height: 106px;
    margin-bottom: 7px;
}

.groups li {
    display: flex;
    align-items: center;
    height: 19px;
    padding-left: 5px;
}

.groups span {
    flex: 1;
    padding-left: 3px;
    line-height: 19px;
}

.groups .selected span {
    background: var(--face);
}

.group-buttons {
    display: flex;
    justify-content: flex-end;
    gap: 4px;
    margin-bottom: 8px;
}

.group-buttons .btn, .note .btn {
    width: 80px;
}

.perm-head {
    display: flex;
    gap: 17px;
    height: 13px;
    margin-bottom: 4px;
    padding-right: 12px;
    white-space: nowrap;
}

.perm-head .who {
    flex: 1;
    padding-top: 2px;
}

.perms {
    display: flex;
    height: 116px;
    margin-bottom: 5px;
}

.perms table {
    flex: 1;
    width: auto;
    margin-top: 2px;
    align-self: flex-start;
}

.perms th {
    height: 18px;
    padding-left: 11px;
}

.perms td {
    width: 69px;
}

.perms td:last-child {
    width: 51px;
}

.perms input {
    display: block;
    position: relative;
    appearance: none;
    width: 13px;
    height: 13px;
    margin: 0 auto;
    border: 2px solid #000;
    background: #fff;
}

.perms input:checked {
    background: var(--face);
}

.perms input:checked::after {
    content: "";
    position: absolute;
    left: 1px;
    top: 1px;
    width: 7px;
    height: 7px;
    background: var(--shadow);
    clip-path: polygon(0 28%, 36% 62%, 100% 0, 100% 42%, 36% 100%, 0 70%);
}

.perms .thumb {
    height: 70px;
}

.note {
    display: flex;
    justify-content: space-between;
    align-items: flex-start;
    white-space: nowrap;
}

.note .btn {
    margin-top: 5px;
}

.actions {
    display: flex;
    justify-content: flex-end;
    gap: 6px;
    margin-top: 6px;
}

.actions .btn {
    width: 75px;
}

/* Object picker */
.dialog-pick .btn {
    width: 99px;
}

.dialog-pick .names {
    margin-top: 12px;
}

.dialog-pick textarea {
    height: 56px;
    background: #fff;
    resize: none;
}

.dialog-pick .bottom {
    margin: 8px 0 0;
}

.dialog-pick .first {
    margin-right: auto;
}

.window a {
    color: #00007b;
}

.grip {
    position: absolute;
    right: 4px;
    bottom: 4px;
    width: 12px;
    height: 12px;
}

/* Advanced search */
.dialog-search .window-body {
    padding-bottom: 4px;
}

.dialog-search .row .field {
    flex: 0 0 371px;
}

.dialog-search .row .btn {
    width: 90px;
}

.query {
    display: flex;
    gap: 18px;
    margin-top: 8px;
}

.query-main {
    flex: 1;
}

.query .panel {
    height: 171px;
    padding: 13px 26px 0 13px;
}

.query .panel label {
    margin: 0;
}

.criteria {
    display: grid;
    grid-template-columns: 68px 88px 1fr;
    align-items: start;
    gap: 6px 4px;
}

.criteria label {
    line-height: 19px;
}

.combo {
    position: relative;
    height: 21px;
    padding: 2px;
    box-shadow: var(--sunken);
}

.combo select {
    display: block;
    appearance: none;
    width: 100%;
    height: 17px;
    padding: 0 2px;
}

.combo::before {
    content: "";
    position: absolute;
    right: 2px;
    top: 2px;
    width: 16px;
    height: 17px;
    background: var(--face);
    box-shadow: var(--raised);
}

.combo::after {
    content: "";
    position: absolute;
    right: 6px;
    top: 8px;
    border: 4px solid transparent;
    border-top-color: var(--shadow);
    border-bottom: 0;
}

.check {
    display: flex;
    align-items: center;
    gap: 5px;
    margin-top: 7px;
}

.criteria + .check {
    margin-top: 12px;
}

.check input {
    appearance: none;
    width: 13px;
    height: 13px;
    box-shadow: var(--sunken);
}

.days {
    display: grid;
    grid-template-columns: 160px 58px;
    align-items: center;
    gap: 4px;
    margin-top: 12px;
}

.query-side {
    display: flex;
    flex-direction: column;
    gap: 8px;
    width: 75px;
    padding-top: 26px;
}

.find {
    width: 32px;
    height: 32px;
    margin: 16px auto 0;
    shape-rendering: crispEdges;
}

.results-bar {
    margin: 19px 0 0;
}

.results-label {
    margin-right: auto;
    padding-top: 15px;
}

.dialog-search .results-bar .btn {
    width: 75px;
}

.results {
    display: flex;
    height: 213px;
}

.results-view {
    flex: 1;
    overflow: hidden;
}

.c-rdn {
    width: 99px;
}

.c-folder {
    width: 101px;
}

.results th, .results thead td {
    height: 16px;
    padding-left: 6px;
    line-height: 15px;
    background: var(--face);
    box-shadow: inset 0 -1px var(--shadow), inset -1px 0 var(--shadow), inset 1px 0 #fff;
}

.results tbody tr {
    height: 17px;
}

.results td:nth-child(2) {
    padding-left: 6px;
}

.results tbody td:first-child {
    display: flex;
    align-items: center;
    height: 17px;
    padding-left: 4px;
    white-space: nowrap;
}

.results tbody span {
    flex: 1;
    padding-left: 2px;
    line-height: 17px;
}

.results .selected span, .results .selected td:nth-child(2) {
    background: var(--navy);
    color: #fff;
}

.results .selected span {
    outline: 1px dotted #e7c66b;
    outline-offset: -1px;
}

.results .selected td:nth-child(2) {
    background: linear-gradient(var(--navy), var(--navy)) center / 100% 15px no-repeat, repeating-linear-gradient(90deg, #e7c66b 0 1px, var(--navy) 1px 2px);
}

.results .selected span {
    outline: none;
    background: linear-gradient(var(--navy), var(--navy)) 1px 1px / 100% 15px no-repeat, repeating-linear-gradient(90deg, #e7c66b 0 1px, var(--navy) 1px 2px);
}

.results .thumb {
    height: 26px;
}
```
